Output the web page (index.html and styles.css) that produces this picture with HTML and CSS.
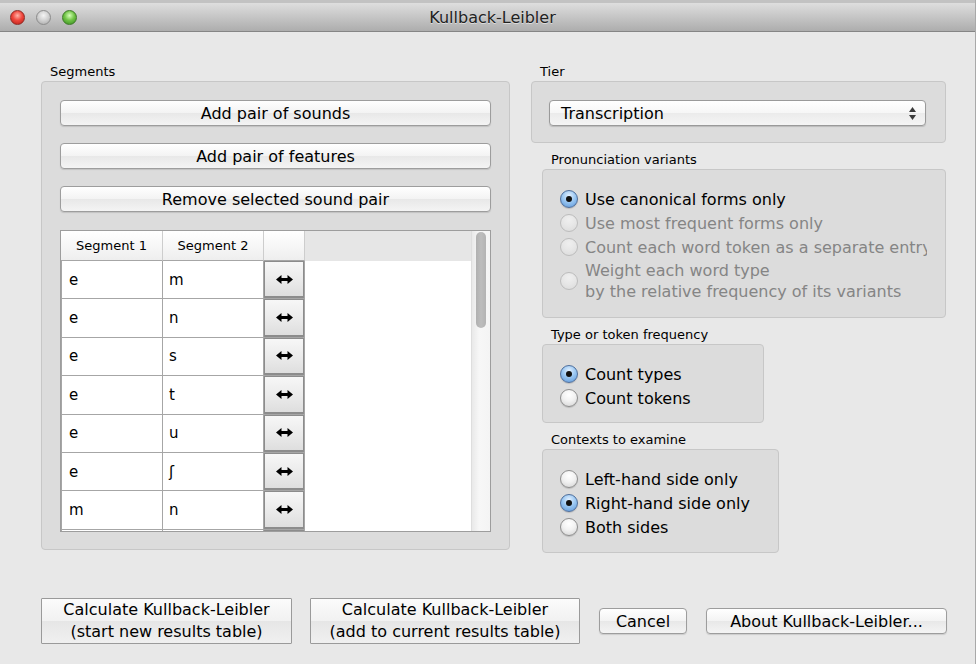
FILE: index.html
```html
<!DOCTYPE html>
<html>
<head>
<meta charset="utf-8">
<title>Kullback-Leibler</title>
<link rel="stylesheet" href="styles.css">
</head>
<body>
<div class="window">
  <div class="titlebar">
    <div class="lights">
      <span class="light red"></span>
      <span class="light gray"></span>
      <span class="light green"></span>
    </div>
    <div class="title">Kullback-Leibler</div>
    <div></div>
  </div>

  <div class="main">
    <div class="col-left">
      <div class="label">Segments</div>
      <div class="group seg-group">
        <button class="btn">Add pair of sounds</button>
        <button class="btn">Add pair of features</button>
        <button class="btn">Remove selected sound pair</button>
        <div class="table">
          <div class="table-main">
            <div class="thead">
              <div class="th c1">Segment 1</div>
              <div class="th c2">Segment 2</div>
              <div class="th c3"></div>
            </div>
            <div class="row"><div class="td c1">e</div><div class="td c2">m</div><div class="td c3"><div class="swap"><svg width="17" height="9" viewBox="0 0 17 9"><polygon points="0,4.5 5.5,0 5.5,9"/><polygon points="17,4.5 11.5,0 11.5,9"/><rect x="4" y="3" width="9" height="3"/></svg></div></div></div>
            <div class="row"><div class="td c1">e</div><div class="td c2">n</div><div class="td c3"><div class="swap"><svg width="17" height="9" viewBox="0 0 17 9"><polygon points="0,4.5 5.5,0 5.5,9"/><polygon points="17,4.5 11.5,0 11.5,9"/><rect x="4" y="3" width="9" height="3"/></svg></div></div></div>
            <div class="row"><div class="td c1">e</div><div class="td c2">s</div><div class="td c3"><div class="swap"><svg width="17" height="9" viewBox="0 0 17 9"><polygon points="0,4.5 5.5,0 5.5,9"/><polygon points="17,4.5 11.5,0 11.5,9"/><rect x="4" y="3" width="9" height="3"/></svg></div></div></div>
            <div class="row"><div class="td c1">e</div><div class="td c2">t</div><div class="td c3"><div class="swap"><svg width="17" height="9" viewBox="0 0 17 9"><polygon points="0,4.5 5.5,0 5.5,9"/><polygon points="17,4.5 11.5,0 11.5,9"/><rect x="4" y="3" width="9" height="3"/></svg></div></div></div>
            <div class="row"><div class="td c1">e</div><div class="td c2">u</div><div class="td c3"><div class="swap"><svg width="17" height="9" viewBox="0 0 17 9"><polygon points="0,4.5 5.5,0 5.5,9"/><polygon points="17,4.5 11.5,0 11.5,9"/><rect x="4" y="3" width="9" height="3"/></svg></div></div></div>
            <div class="row"><div class="td c1">e</div><div class="td c2">ʃ</div><div class="td c3"><div class="swap"><svg width="17" height="9" viewBox="0 0 17 9"><polygon points="0,4.5 5.5,0 5.5,9"/><polygon points="17,4.5 11.5,0 11.5,9"/><rect x="4" y="3" width="9" height="3"/></svg></div></div></div>
            <div class="row"><div class="td c1">m</div><div class="td c2">n</div><div class="td c3"><div class="swap"><svg width="17" height="9" viewBox="0 0 17 9"><polygon points="0,4.5 5.5,0 5.5,9"/><polygon points="17,4.5 11.5,0 11.5,9"/><rect x="4" y="3" width="9" height="3"/></svg></div></div></div>
            <div class="row"><div class="td c1"></div><div class="td c2"></div><div class="td c3"><div class="swap"></div></div></div>
          </div>
          <div class="scrollbar"><div class="thumb"></div></div>
        </div>
      </div>
    </div>

    <div class="col-right">
      <div class="label">Tier</div>
      <div class="group tier-group">
        <div class="select">
          <span>Transcription</span>
          <svg class="updown" width="7" height="13" viewBox="0 0 7 13"><polygon points="3.5,0 7,5 0,5"/><polygon points="3.5,13 7,8 0,8"/></svg>
        </div>
      </div>

      <div class="sub">
        <div class="label">Pronunciation variants</div>
        <div class="group radio-group pron-group">
          <div class="radio"><span class="dot on"></span><span class="rtext">Use canonical forms only</span></div>
          <div class="radio disabled"><span class="dot"></span><span class="rtext">Use most frequent forms only</span></div>
          <div class="radio disabled"><span class="dot"></span><span class="rtext">Count each word token as a separate entry</span></div>
          <div class="radio disabled multi"><span class="dot"></span><span class="rtext">Weight each word type<br>by the relative frequency of its variants</span></div>
        </div>

        <div class="label">Type or token frequency</div>
        <div class="group radio-group type-group">
          <div class="radio"><span class="dot on"></span><span class="rtext">Count types</span></div>
          <div class="radio"><span class="dot"></span><span class="rtext">Count tokens</span></div>
        </div>

        <div class="label">Contexts to examine</div>
        <div class="group radio-group ctx-group">
          <div class="radio"><span class="dot"></span><span class="rtext">Left-hand side only</span></div>
          <div class="radio"><span class="dot on"></span><span class="rtext">Right-hand side only</span></div>
          <div class="radio"><span class="dot"></span><span class="rtext">Both sides</span></div>
        </div>
      </div>
    </div>
  </div>

  <div class="actions">
    <button class="btn-square w1">Calculate Kullback-Leibler<br>(start new results table)</button>
    <button class="btn-square w2">Calculate Kullback-Leibler<br>(add to current results table)</button>
    <button class="btn small cancel">Cancel</button>
    <button class="btn small about">About Kullback-Leibler...</button>
  </div>
</div>
</body>
</html>
```

FILE: styles.css
```css
* { box-sizing: border-box; }

body {
  margin: 0;
  background: #ffffff;
  font-family: "DejaVu Sans", "Liberation Sans", sans-serif;
  color: #000;
}

.window {
  width: 976px;
  height: 664px;
  background: #e8e8e8;
  border-right: 1px solid #a9a9a9;
  overflow: hidden;
}

/* ---------- title bar ---------- */
.titlebar {
  height: 32px;
  border-top: 3px solid #c2c2c2;
  border-bottom: 1px solid #858585;
  background: linear-gradient(#dedede, #adadad);
  display: grid;
  grid-template-columns: 1fr auto 1fr;
  align-items: center;
  padding-left: 10px;
}

.lights {
  display: flex;
  gap: 11px;
}

.light {
  width: 15px;
  height: 15px;
  border-radius: 50%;
  display: block;
}

.light.red {
  background: radial-gradient(circle at 50% 35%, #ffb3a8 0%, #f0473d 45%, #b51d14 100%);
  border: 1px solid #8f2a24;
}

.light.gray {
  background: radial-gradient(circle at 50% 35%, #f4f4f4 0%, #cfcfcf 50%, #a4a4a4 100%);
  border: 1px solid #8c8c8c;
}

.light.green {
  background: radial-gradient(circle at 50% 35%, #d6ffb8 0%, #72c548 45%, #34891c 100%);
  border: 1px solid #3e7a28;
}

.title {
  font-size: 16px;
  color: #222222;
  text-shadow: 0 1px 0 rgba(255,255,255,0.5);
}

/* ---------- main columns ---------- */
.main {
  display: flex;
  gap: 21px;
  padding: 31px 0 0 41px;
}

.col-left { width: 469px; }
.col-right { width: 415px; }

.label {
  font-size: 13px;
  line-height: 18px;
  height: 18px;
  padding-left: 9px;
}

.group {
  background: #dcdcdc;
  border: 1px solid #c7c7c7;
  border-radius: 4px;
}

.seg-group {
  height: 469px;
  padding: 18px 18px 0 18px;
  display: flex;
  flex-direction: column;
}

/* ---------- buttons ---------- */
.btn {
  font-family: inherit;
  font-size: 16px;
  height: 26px;
  color: #000;
  background: linear-gradient(#ffffff, #f3f3f3 50%, #e8e8e8 51%, #f4f4f4);
  border: 1px solid #9d9d9d;
  border-radius: 4px;
  box-shadow: 0 1px 1px rgba(0,0,0,0.12);
  padding: 0;
  margin-bottom: 17px;
}

/* ---------- table ---------- */
.table {
  margin-top: 1px;
  height: 302px;
  border: 1px solid #9d9d9d;
  background: #ffffff;
  display: flex;
}

.table-main {
  flex: 1;
  overflow: hidden;
}

.thead {
  height: 30px;
  background: #e6e6e6;
  display: flex;
}

.th {
  height: 30px;
  font-size: 13px;
  line-height: 29px;
  text-align: center;
  background: linear-gradient(#ffffff, #f7f7f7 50%, #eeeeee);
  border-bottom: 1px solid #a6a6a6;
  border-right: 1px solid #cdcdcd;
}

.c1 { width: 102px; }
.c2 { width: 101px; }
.c3 { width: 41px; }

.row {
  display: flex;
  height: 38.4px;
}

.td {
  border-right: 1px solid #a6a6a6;
  border-bottom: 1px solid #a6a6a6;
  font-size: 15px;
  display: flex;
  align-items: center;
  padding-left: 7px;
}

.td.c1 { border-left: 1px solid #a6a6a6; }
.td.c2 { padding-left: 6px; }

.td.c3 {
  padding: 0;
  align-items: stretch;
}

.swap {
  flex: 1;
  border: 1px solid #8c8c8c;
  border-bottom-width: 2px;
  background: linear-gradient(#f7f7f7, #e9e9e9 60%, #dedede);
  display: flex;
  align-items: center;
  justify-content: center;
}

.swap svg { fill: #000; }

.scrollbar {
  width: 19px;
  background: linear-gradient(90deg, #e9e9e9, #f7f7f7 40%, #f4f4f4);
  border-left: 1px solid #dedede;
  padding: 1px 0 0 4px;
}

.thumb {
  width: 10px;
  height: 96px;
  border-radius: 5px;
  background: linear-gradient(90deg, #b0b0b0, #bdbdbd 50%, #b3b3b3);
}

/* ---------- right column ---------- */
.tier-group {
  height: 62px;
  padding: 18px 19px 0 17px;
}

.select {
  height: 26px;
  border: 1px solid #9a9a9a;
  border-radius: 4px;
  background: linear-gradient(#ffffff, #f6f6f6 50%, #ebebeb 51%, #f5f5f5);
  box-shadow: 0 1px 1px rgba(0,0,0,0.15);
  font-size: 16px;
  display: flex;
  align-items: center;
  justify-content: space-between;
  padding: 0 9px 0 11px;
}

.updown { fill: #3a3a3a; }

.sub { padding-left: 11px; }

.sub .label { margin-top: 8px; }

.radio-group {
  padding: 17px 18px 0 17px;
}

.pron-group { height: 149px; }
.type-group { width: 222px; height: 79px; }
.ctx-group { width: 237px; height: 104px; }

.radio {
  display: flex;
  align-items: center;
  height: 24px;
  font-size: 16px;
  white-space: nowrap;
  overflow: hidden;
}

.radio.multi {
  height: 42px;
  margin-top: 1px;
  line-height: 21px;
}

.dot {
  flex: none;
  width: 18px;
  height: 18px;
  border-radius: 50%;
  border: 1px solid #8e8e8e;
  background: radial-gradient(circle at 50% 30%, #ffffff 0%, #f2f2f2 45%, #d2d2d2 100%);
  box-shadow: 0 1px 1px rgba(0,0,0,0.15);
  margin-right: 7px;
  display: flex;
  align-items: center;
  justify-content: center;
}

.dot.on {
  border-color: #4f6f9c;
  background: radial-gradient(circle at 50% 30%, #e4f1ff 0%, #9cc8f2 45%, #5a95d8 100%);
}

.dot.on::after {
  content: "";
  width: 6px;
  height: 6px;
  border-radius: 50%;
  background: #111;
}

.radio.disabled { color: #858585; }

.radio.disabled .dot {
  border-color: #bcbcbc;
  background: radial-gradient(circle at 50% 30%, #efefef 0%, #e6e6e6 50%, #dadada 100%);
  box-shadow: none;
}

.rtext { overflow: hidden; }

/* ---------- bottom actions ---------- */
.actions {
  display: flex;
  align-items: center;
  padding-left: 41px;
  margin-top: 45px;
}

.btn-square {
  font-family: inherit;
  font-size: 16px;
  line-height: 22px;
  height: 46px;
  color: #000;
  border: 1px solid #9a9a9a;
  border-radius: 1px;
  background: linear-gradient(#fbfbfb, #f1f1f1 50%, #e6e6e6 51%, #f0f0f0);
  padding: 0;
  margin-right: 18px;
}

.w1 { width: 251px; }
.w2 { width: 270px; margin-right: 19px; }

.btn.small {
  margin-bottom: 0;
  height: 26px;
}

.cancel { width: 88px; margin-right: 19px; }
.about { width: 241px; }
```
